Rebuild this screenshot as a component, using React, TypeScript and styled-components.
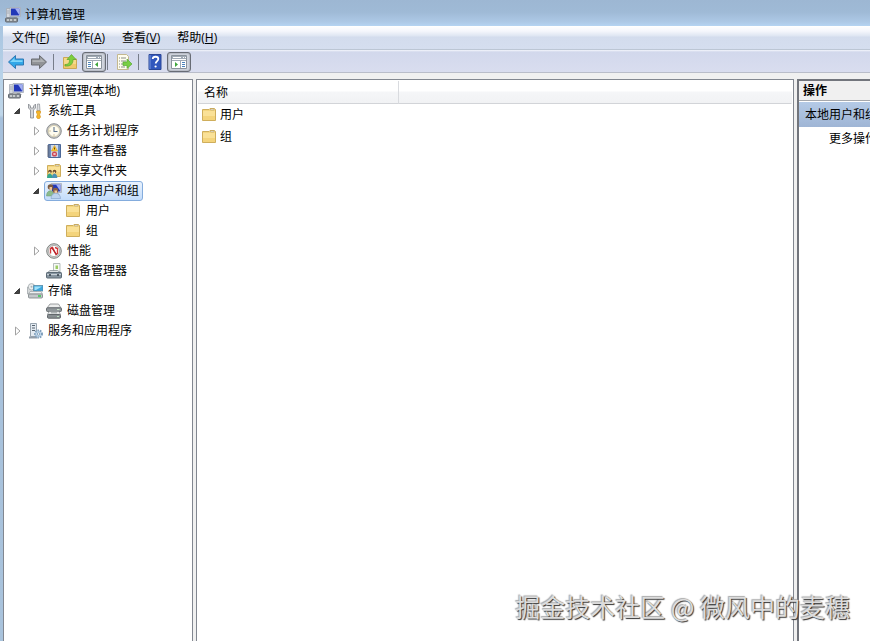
import React from "react";
import styled, { createGlobalStyle } from "styled-components";

const GlobalStyle = createGlobalStyle`
  * { box-sizing: border-box; }
  body {
    margin: 0;
    overflow: hidden;
    color: #000;
    font: 12px/20px "Open Sans", "Noto Sans CJK SC", sans-serif;
  }
  button { font: inherit; color: inherit; }
  ul { list-style: none; margin: 0; padding: 0; }
  svg { display: block; flex: none; }
`;

const Window = styled.div`
  position: relative;
  display: flex;
  flex-direction: column;
  height: 100vh;
  padding-left: 3px;
  background: linear-gradient(#9cb7d3, #a9c5e0 26px, #b9d3e9 80px, #bfd6e9 115px, #a7c1dc 118px, #a9c3dc);
  white-space: nowrap;
  overflow: hidden;
`;

const TitleBar = styled.header`
  display: flex;
  align-items: center;
  gap: 4px;
  flex: 0 0 26px;
  margin-left: -3px;
  padding: 3px 5px 0;
  background: linear-gradient(#9db7d3, #9fbad6 12px, #adc9e6 22px, #b5d4f2);
`;

const Title = styled.h1`
  margin: 0;
  font-size: 12px;
  font-weight: 400;
  line-height: 20px;
`;

const MenuBar = styled.nav`
  display: flex;
  align-items: center;
  gap: 17px;
  flex: 0 0 24px;
  padding-left: 9px;
  background: linear-gradient(#fff, #f5f7fc 5px, #dee5f2 10px, #d3dced 11px, #d5deef);
  border-bottom: 1px solid #bcc6d4;
`;

const MenuButton = styled.button`
  padding: 0;
  border: 0;
  background: none;
  line-height: 20px;
`;

const ToolBar = styled.div`
  display: flex;
  align-items: center;
  flex: 0 0 23px;
  padding: 1px 1px 0;
  background: linear-gradient(#f4f6fc, #d2d8ec 2px, #d9ddef);
  border-bottom: 1px solid #b9bdc9;
`;

const ToolButton = styled.button<{ $pressed?: boolean }>`
  display: flex;
  align-items: center;
  justify-content: center;
  width: ${(p) => (p.$pressed ? "24px" : "23px")};
  height: 20px;
  margin: ${(p) => (p.$pressed ? "0 -2px 0 1px" : "0")};
  padding: 0;
  border: ${(p) => (p.$pressed ? "1px solid #686c75" : "0")};
  border-radius: 3px;
  background: ${(p) => (p.$pressed ? "#d2d6df" : "none")};
  box-shadow: ${(p) => (p.$pressed ? "inset 0 0 2px #777d88" : "none")};
`;

const Separator = styled.span`
  width: 1px;
  height: 16px;
  margin: 0 4px 0 3px;
  background: #777d8a;
`;

const Workspace = styled.main`
  display: grid;
  grid-template-columns: 190px minmax(0, 1fr) 73px;
  gap: 3px;
  flex: 1;
  min-height: 0;
  padding-top: 6px;
  background: #f0f0f0;
`;

const Pane = styled.section`
  min-width: 0;
  background: #fff;
  border: 1px solid #828790;
  border-bottom: 0;
  overflow: hidden;
`;

const TreePane = styled(Pane)`
  padding: 1px 2px;
`;

const ListPane = styled(Pane)`
  padding: 1px;
`;

const ActionPane = styled(Pane)`
  border: 2px solid #72757c;
  border-right: 0;
  border-bottom: 0;
`;

const Branch = styled.ul<{ $nested?: boolean }>`
  && { padding-left: ${(p) => (p.$nested ? "19px" : "0")}; }
`;

const TreeRow = styled.div`
  display: flex;
  align-items: center;
  height: 20px;
`;

const Expander = styled.button`
  display: flex;
  align-items: center;
  width: 19px;
  height: 20px;
  padding: 0 0 0 7px;
  border: 0;
  background: none;
`;

const Leaf = styled.span`
  width: 19px;
`;

const TreeLabel = styled.button<{ $selected?: boolean }>`
  display: flex;
  align-items: center;
  gap: 5px;
  height: 20px;
  padding: 0 3px 0 1px;
  border: 1px solid ${(p) => (p.$selected ? "#84acdd" : "transparent")};
  border-radius: 3px;
  background: ${(p) => (p.$selected ? "linear-gradient(#e9f2fd, #c3dcfa)" : "none")};
  line-height: 18px;
`;

const FileTable = styled.table`
  width: 100%;
  table-layout: fixed;
  border-collapse: separate;
  border-spacing: 0;
`;

const HeaderCell = styled.th<{ $width?: string }>`
  width: ${(p) => p.$width ?? "auto"};
  height: 23px;
  padding: 2px 6px 0;
  text-align: left;
  font-weight: 400;
  background: linear-gradient(#fff 10px, #f5f6f8 11px, #f1f2f4);
  border-right: 1px solid ${(p) => (p.$width ? "#d9dbdf" : "transparent")};
  border-bottom: 1px solid #d2d4d8;
`;

const FileCell = styled.td`
  height: 22px;
  padding: 0 3px;
`;

const FileName = styled.span`
  display: flex;
  align-items: center;
  gap: 3px;
`;

const ActionTitle = styled.h2`
  margin: 0;
  padding-left: 4px;
  height: 20px;
  font-size: 12px;
  line-height: 20px;
  background: #f0f0f0;
  border-bottom: 1px solid #a5a8ad;
`;

const ActionGroup = styled.button`
  display: block;
  width: 100%;
  height: 25px;
  margin-top: 1px;
  padding: 0 0 0 6px;
  border: 0;
  text-align: left;
  background: linear-gradient(#b4cae6, #9fb5d5);
`;

const ActionItem = styled.button`
  display: block;
  height: 24px;
  padding: 0 0 0 30px;
  border: 0;
  background: none;
`;

const Watermark = styled.p`
  position: absolute;
  right: 20px;
  bottom: 17px;
  margin: 0;
  font: 25px/36px "Noto Sans CJK SC", sans-serif;
  color: #dcdcdc;
  text-shadow: 1px 1px 1px #333, -1px -1px 1px #aaa;
`;

type IconName =
  | "computer" | "tools" | "clock" | "events" | "shared" | "users" | "folder"
  | "performance" | "device" | "storage" | "disk" | "services"
  | "back" | "forward" | "up" | "treeView" | "export" | "help" | "actionView";

const monitor = (
  <>
    <path d="M5 .5h10.5v9H5z" fill="#dde2ea" stroke="#a4acb8" strokeWidth=".8" />
    <path d="M6 1.5h8.5v7H6z" fill="#2238b8" />
    <path d="M10 1.5h4.5v7z" fill="#a3b0f2" />
    <path d="M9 10h3l2 2H8z" fill="#a7aeb8" />
  </>
);

const folder = (
  <>
    <path d="M1.5 13.5v-11h6.5l1-1h4.5l1 1v11z" fill="#f3d57e" stroke="#cfae5c" />
    <path d="M9.5 2h3.5v1H9.5z" fill="#fff" stroke="#b5a374" strokeWidth=".6" />
    <path d="M2 4h12v9H2z" fill="#fae197" />
    <path d="M2 9h12v4H2z" fill="#f4d47c" />
  </>
);

const panelWindow = (
  <>
    <path d="M.5 1.5h15v13H.5z" fill="#fff" stroke="#8b939c" />
    <path d="M1 2h14v3H1z" fill="#a1aab5" />
    <path d="M2 3.5h8m2 0h1m1 0h1" stroke="#fff" />
    <path d="M1 6.5h14" stroke="#a1aab5" />
  </>
);

const artwork: Record<IconName, React.ReactNode> = {
  computer: (
    <>
      {monitor}
      <path d="M1.5 1.5H5v9H1.5z" fill="#d4d8de" stroke="#a5abb4" strokeWidth=".8" />
      <path d="M2 4h2.500M2 6h2.500" stroke="#9aa2ae" strokeWidth=".8" />
      <rect x=".5" y="11" width="12" height="4" rx="1" fill="#8a9096" stroke="#646a71" />
      <path d="M2 13h2m1 0h2m2 0h2" stroke="#d9dddd" strokeWidth="1.3" />
    </>
  ),
  tools: (
    <>
      <path d="M1.5 1v4l2 2v8h3V7l2-2V1L6.500 3v2h-3V3z" fill="#d6d8da" stroke="#85898f" strokeWidth=".8" />
      <path d="M10.500 1h2l.5 6.500h-3z" fill="#dedfe1" stroke="#8c9096" strokeWidth=".7" />
      <path d="M9.500 8h4v2l-1 1 1 3-1 1.500h-2l-1-1.500 1-3-1-1z" fill="#f5b629" stroke="#d8951c" strokeWidth=".7" />
    </>
  ),
  clock: (
    <>
      <circle cx="8" cy="8" r="7.300" fill="#c3c4c4" stroke="#8d9091" />
      <circle cx="8" cy="8" r="5.600" fill="#fffcee" stroke="#d4cca9" strokeWidth=".8" />
      <path d="M8 4v4.500h3.500" fill="none" stroke="#5c7390" strokeWidth="1.100" />
      <path d="M3.500 8h1M8 11.500v1" stroke="#a48d57" />
    </>
  ),
  events: (
    <>
      <path d="M2.500 1.500h12v13h-12z" fill="#6d8fc4" stroke="#4c6898" />
      <path d="M5 2h7v12H5z" fill="#cdd9ea" />
      <path d="M1 3h3M1 5h3M1 7h3M1 9h3M1 11h3M1 13h3" stroke="#6b7180" />
      <path d="m8.500 2.500 3 5.500h-6z" fill="#ffcf37" stroke="#d39a1b" strokeWidth=".6" />
      <path d="M8.500 4.500v2" stroke="#6c4b00" />
      <circle cx="8.500" cy="11" r="2.600" fill="#cf4a58" />
      <path d="m7.500 10 2 2m0-2-2 2" stroke="#fff" strokeWidth=".8" />
    </>
  ),
  shared: (
    <>
      {folder}
      <circle cx="4" cy="8.500" r="1.800" fill="#6b4a2c" />
      <circle cx="8.500" cy="8.500" r="1.800" fill="#6b4a2c" />
      <path d="M1 15c0-6 5.500-6 5.500 0z" fill="#35a78f" />
      <path d="M5.800 15c0-6 5.500-6 5.500 0z" fill="#4d92b5" />
      <path d="M3 9.500h1.500M7.500 9.500H9" stroke="#ffe0aa" strokeWidth="1.500" />
    </>
  ),
  users: (
    <>
      {monitor}
      <circle cx="4.500" cy="4" r="2.800" fill="#7b5a40" />
      <path d="M3.500 4h2.500v3H3.500z" fill="#edc297" />
      <path d="M.5 13c0-7 7.500-7 7.500 0z" fill="#8cbb8c" stroke="#6a9b6c" strokeWidth=".5" />
      <circle cx="9.500" cy="7.500" r="2.700" fill="#8b6142" />
      <path d="M8.500 7.500H11v3H8.500z" fill="#f1ca9e" />
      <path d="M5 15.500c0-7 9.500-7 9.500 0z" fill="#bcd3ee" stroke="#7f9fc6" strokeWidth=".6" />
    </>
  ),
  folder,
  performance: (
    <>
      <circle cx="8" cy="8" r="7.300" fill="#d2d4d3" stroke="#7f8280" />
      <circle cx="8" cy="8" r="5.600" fill="#fff" stroke="#a2a7a4" strokeWidth=".8" />
      <path d="M4.500 10.500v-5l2-1 3.500 7 1.500-1v-5L9 4.500" fill="none" stroke="#d33a3a" strokeWidth="1.400" />
      <path d="m5.500 4.500 5 7" stroke="#b3202a" strokeWidth="1.200" />
    </>
  ),
  device: (
    <>
      <path d="M7.500.5h6.500V9H7.500z" fill="#f5f8f5" stroke="#9aa3a0" strokeWidth=".7" />
      <path d="M9.500 2.500h2.500v3.500H9.500z" fill="#9bcb62" />
      <path d="M4 7.500h7.500L15 10H1z" fill="#dde2e4" stroke="#78838a" strokeWidth=".7" />
      <rect x=".5" y="9.500" width="15" height="5.500" rx=".8" fill="#8795a0" stroke="#5c6a75" />
      <path d="M1 11.500h14" stroke="#c9d2d8" />
      <path d="M4 11v2m8-2v2" stroke="#333f48" strokeWidth="1.500" />
    </>
  ),
  storage: (
    <>
      <path d="M.5 4h9v7h-9z" fill="#d6d9da" stroke="#a3a9ac" strokeWidth=".8" />
      <circle cx="4.500" cy="3.800" r="3.200" fill="#eceeee" stroke="#a0a7a9" strokeWidth=".8" />
      <circle cx="4.500" cy="3.800" r="1" fill="#aeb5b8" />
      <path d="M6.500 2.500H16V8H6.500z" fill="#3ea6db" stroke="#5b8ca6" strokeWidth=".8" />
      <path d="M7.500 3.500H15L9 7H7.500z" fill="#a1e2fa" />
      <path d="M3 8.500h11l1.500 2.500H1.500z" fill="#eef0f1" stroke="#9ba1a4" strokeWidth=".7" />
      <rect x="1.500" y="11" width="14" height="4" rx="1" fill="#c3c7ca" stroke="#7a8184" strokeWidth=".8" />
      <path d="M11 13h3" stroke="#36c84b" strokeWidth="1.500" />
    </>
  ),
  disk: (
    <>
      <path d="M4 1h8.500L15 5H1z" fill="#eceded" stroke="#85898c" strokeWidth=".8" />
      <rect x=".5" y="4.800" width="15" height="3.700" rx="1" fill="#90969a" stroke="#666c70" />
      <path d="M11 6.500h2.500" stroke="#cde3cd" />
      <path d="M3 8.500h10l1.500 3h-13z" fill="#e4e6e7" stroke="#8a8f92" strokeWidth=".7" />
      <rect x="1.500" y="11.500" width="13" height="3.700" rx="1" fill="#888e92" stroke="#61676b" />
      <path d="M5 9.800h6" stroke="#989da0" />
      <path d="M11 13.500h2" stroke="#bfe0c3" />
    </>
  ),
  services: (
    <>
      <path d="M3.500.5h6v13h-6z" fill="#e3eaf1" stroke="#98a4af" />
      <path d="M5 2.500h3M5 5h3M5 7.500h3" stroke="#56636f" />
      <path d="M2 14.500h8" stroke="#929da8" strokeWidth="2" />
      <circle cx="11.500" cy="11" r="3.500" fill="#c4daed" stroke="#7f9fbc" strokeWidth="2" strokeDasharray="1.500 1" />
      <circle cx="11.500" cy="11" r="1.200" fill="#fff" stroke="#688ba9" strokeWidth=".7" />
    </>
  ),
  back: (
    <>
      <path d="M.5 8 7.500 1.500V5h8v6h-8v3.500z" fill="#32a7e8" stroke="#2f78b4" strokeLinejoin="round" />
      <path d="m2 8 4.500-4v2.200h8V8z" fill="#7ed6fa" />
    </>
  ),
  forward: (
    <>
      <path d="M15.500 8l-7-6.500V5h-8v6h8v3.500z" fill="#919397" stroke="#6b6d72" strokeLinejoin="round" />
      <path d="m14 8-4.500-4v2.200h-8V8z" fill="#b0b2b5" />
    </>
  ),
  up: (
    <>
      <path d="M1.500 14.500v-11h5l1.500 1.500h6.500v9.500z" fill="#f6d988" stroke="#cba755" />
      <path d="M2 10h12v4H2z" fill="#efc96b" />
      <path d="M3 10.500c4 0 4.500-2 4.500-5H5L9.500.5 14 5.500h-3c0 5-3 7-8 6.500z" fill="#7dcf3d" stroke="#5aa32e" strokeWidth=".7" />
    </>
  ),
  treeView: (
    <>
      {panelWindow}
      <path d="M6.500 7v7" stroke="#a1aab5" />
      <path d="M2 8.500h3m-3 2h3m-3 2h3" stroke="#4b83bc" />
      <path d="M12 8v5L9 10.500z" fill="#3fa63c" />
    </>
  ),
  export: (
    <>
      <path d="M1.500.5h9l2 2v13h-11z" fill="#fffdee" stroke="#c4b88f" />
      <path d="M3 4h1m1 0h5M3 7h1m1 0h5M3 10h1m1 0h3M3 13h1m1 0h4" stroke="#8b8f8a" />
      <path d="M7 8h4V5l5 5-5 4.500v-3H7z" fill="#79ce43" stroke="#57ab36" strokeWidth=".7" />
    </>
  ),
  help: (
    <>
      <path d="M2 .5h12v15H2z" fill="#3157bd" stroke="#2b4796" />
      <path d="M3 1v14" stroke="#7795dd" />
      <path d="M5.700 5c.2-3 5.600-3 5.600 0 0 2-2.600 2.200-2.600 4.500" fill="none" stroke="#fff" strokeWidth="1.800" />
      <circle cx="8.600" cy="12.500" r="1.100" fill="#fff" />
    </>
  ),
  actionView: (
    <>
      {panelWindow}
      <path d="M9.500 7v7" stroke="#a1aab5" />
      <path d="M11 8.500h3m-3 2h3m-3 2h3" stroke="#4b83bc" />
      <path d="M4 8v5l3-2.500z" fill="#3fa63c" />
    </>
  ),
};

const Icon = ({ name, size = 16 }: { name: IconName; size?: number }) => (
  <svg width={size} height={size} viewBox="0 0 16 16" aria-hidden="true">
    {artwork[name]}
  </svg>
);

const Triangle = ({ open }: { open: boolean }) => (
  <svg width="9" height="10" viewBox="0 0 9 10" aria-hidden="true">
    {open ? (
      <path d="M6.500 2.500v5h-5z" fill="#444" stroke="#222" strokeWidth=".8" />
    ) : (
      <path d="M2.500 1v8l4.500-4z" fill="#fff" stroke="#a3a3a3" />
    )}
  </svg>
);

interface TreeNode {
  label: string;
  icon: IconName;
  expandable?: boolean;
  selected?: boolean;
  children?: TreeNode[];
}

const tree: TreeNode[] = [
  {
    label: "系统工具",
    icon: "tools",
    children: [
      { label: "任务计划程序", icon: "clock", expandable: true },
      { label: "事件查看器", icon: "events", expandable: true },
      { label: "共享文件夹", icon: "shared", expandable: true },
      {
        label: "本地用户和组",
        icon: "users",
        selected: true,
        children: [
          { label: "用户", icon: "folder" },
          { label: "组", icon: "folder" },
        ],
      },
      { label: "性能", icon: "performance", expandable: true },
      { label: "设备管理器", icon: "device" },
    ],
  },
  { label: "存储", icon: "storage", children: [{ label: "磁盘管理", icon: "disk" }] },
  { label: "服务和应用程序", icon: "services", expandable: true },
];

const TreeBranch = ({ nodes, nested }: { nodes: TreeNode[]; nested?: boolean }) => (
  <Branch $nested={nested}>
    {nodes.map((node) => (
      <li key={node.label}>
        <TreeRow>
          {node.children || node.expandable ? (
            <Expander aria-label={node.label} aria-expanded={!!node.children}>
              <Triangle open={!!node.children} />
            </Expander>
          ) : (
            <Leaf />
          )}
          <TreeLabel $selected={node.selected}>
            <Icon name={node.icon} />
            {node.label}
          </TreeLabel>
        </TreeRow>
        {node.children && <TreeBranch nodes={node.children} nested />}
      </li>
    ))}
  </Branch>
);

const menus = [
  ["文件", "F"],
  ["操作", "A"],
  ["查看", "V"],
  ["帮助", "H"],
];

export default function App() {
  return (
    <Window>
      <GlobalStyle />
      <TitleBar>
        <Icon name="computer" />
        <Title>计算机管理</Title>
      </TitleBar>
      <MenuBar>
        {menus.map(([label, key]) => (
          <MenuButton key={key}>
            {label}(<u>{key}</u>)
          </MenuButton>
        ))}
      </MenuBar>
      <ToolBar>
        <ToolButton aria-label="后退"><Icon name="back" /></ToolButton>
        <ToolButton aria-label="前进"><Icon name="forward" /></ToolButton>
        <Separator />
        <ToolButton aria-label="向上"><Icon name="up" /></ToolButton>
        <ToolButton aria-label="控制台树" aria-pressed $pressed><Icon name="treeView" /></ToolButton>
        <Separator />
        <ToolButton aria-label="导出列表"><Icon name="export" /></ToolButton>
        <Separator />
        <ToolButton aria-label="帮助"><Icon name="help" /></ToolButton>
        <ToolButton aria-label="操作窗格" aria-pressed $pressed><Icon name="actionView" /></ToolButton>
      </ToolBar>
      <Workspace>
        <TreePane>
          <TreeRow>
            <TreeLabel>
              <Icon name="computer" />
              计算机管理(本地)
            </TreeLabel>
          </TreeRow>
          <TreeBranch nodes={tree} />
        </TreePane>
        <ListPane>
          <FileTable>
            <thead>
              <tr>
                <HeaderCell $width="201px">名称</HeaderCell>
                <HeaderCell />
              </tr>
            </thead>
            <tbody>
              {["用户", "组"].map((name) => (
                <tr key={name}>
                  <FileCell>
                    <FileName>
                      <Icon name="folder" />
                      {name}
                    </FileName>
                  </FileCell>
                </tr>
              ))}
            </tbody>
          </FileTable>
        </ListPane>
        <ActionPane>
          <ActionTitle>操作</ActionTitle>
          <ActionGroup>本地用户和组</ActionGroup>
          <ActionItem>更多操作</ActionItem>
        </ActionPane>
      </Workspace>
      <Watermark>掘金技术社区 @ 微风中的麦穗</Watermark>
    </Window>
  );
}
